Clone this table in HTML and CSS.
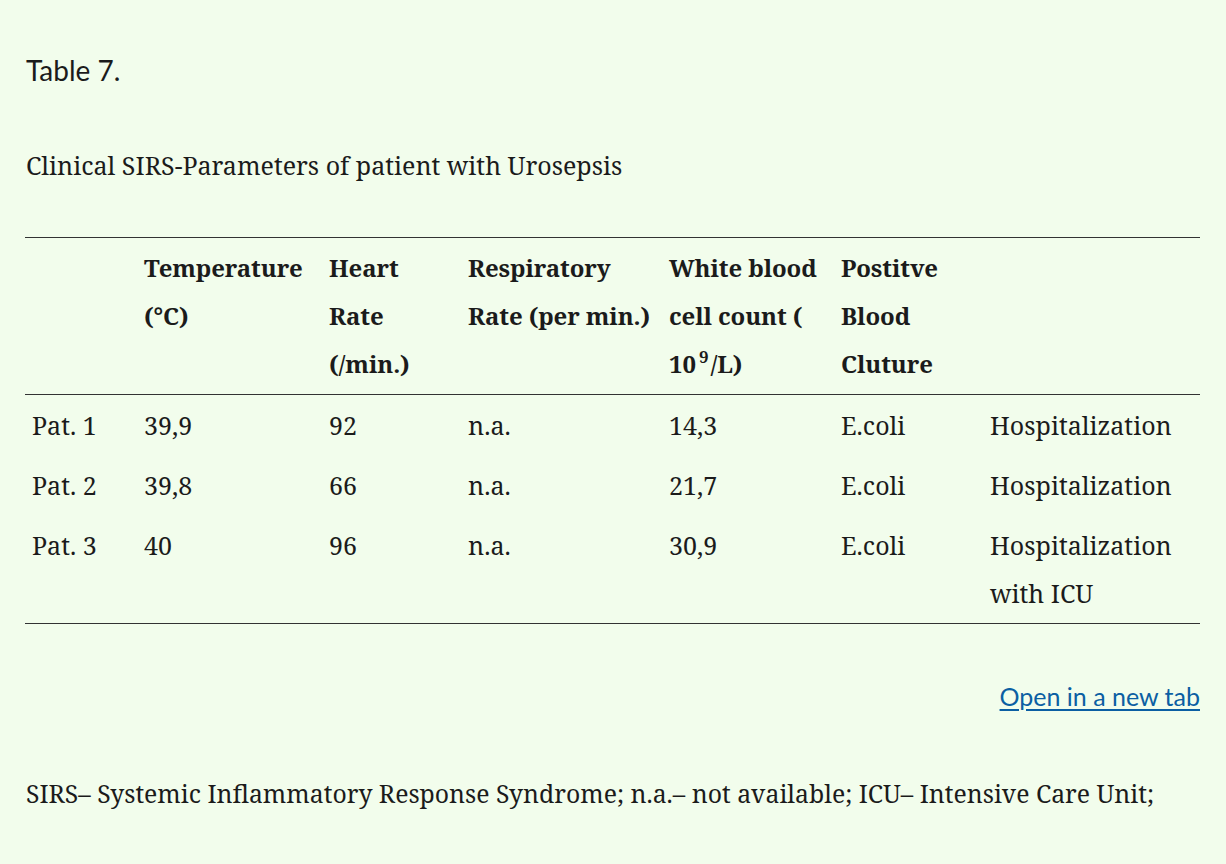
FILE: index.html
```html
<!DOCTYPE html>
<html>
<head>
<meta charset="utf-8">
<title>Table 7</title>
<link rel="stylesheet" href="styles.css">
</head>
<body>
<main class="page">
  <h3 class="title">Table 7.</h3>
  <p class="caption">Clinical SIRS-Parameters of patient with Urosepsis</p>
  <table class="data">
    <colgroup>
      <col class="c1"><col class="c2"><col class="c3"><col class="c4"><col class="c5"><col class="c6"><col class="c7">
    </colgroup>
    <thead>
      <tr>
        <th></th>
        <th>Temperature (°C)</th>
        <th>Heart Rate (/min.)</th>
        <th>Respiratory Rate (per min.)</th>
        <th>White blood cell count ( 10<sup>9</sup>/L)</th>
        <th>Postitve Blood Cluture</th>
        <th></th>
      </tr>
    </thead>
    <tbody>
      <tr><td>Pat. 1</td><td>39,9</td><td>92</td><td>n.a.</td><td>14,3</td><td>E.coli</td><td>Hospitalization</td></tr>
      <tr><td>Pat. 2</td><td>39,8</td><td>66</td><td>n.a.</td><td>21,7</td><td>E.coli</td><td>Hospitalization</td></tr>
      <tr><td>Pat. 3</td><td>40</td><td>96</td><td>n.a.</td><td>30,9</td><td>E.coli</td><td>Hospitalization with ICU</td></tr>
    </tbody>
  </table>
  <div class="links"><a href="#" class="newtab">Open in a new tab</a></div>
  <p class="foot">SIRS– Systemic Inflammatory Response Syndrome; n.a.– not available; ICU– Intensive Care Unit;</p>
</main>
</body>
</html>
```
FILE: styles.css
```css
html, body {
  margin: 0;
  padding: 0;
  background: #f2fdec;
}
body {
  color: #1b1b1b;
  font-family: "Noto Serif", "Liberation Serif", serif;
  font-size: 25px;
}
.page {
  padding: 50px 26px 40px 25px;
}
.title {
  margin: 0;
  font-family: Lato, "Noto Sans", sans-serif;
  font-weight: 400;
  font-size: 28px;
  line-height: 40px;
  padding-left: 1px;
}
.caption {
  margin: 51px 0 48px 1px;
  line-height: 48px;
}
.data {
  width: 1175px;
  table-layout: fixed;
  border-collapse: collapse;
  border-top: 1px solid #333;
  border-bottom: 1px solid #333;
}
.c1 { width: 112px; }
.c2 { width: 185px; }
.c3 { width: 139px; }
.c4 { width: 201px; }
.c5 { width: 172px; }
.c6 { width: 149px; }
.c7 { width: 217px; }
.data th,
.data td {
  text-align: left;
  vertical-align: top;
  padding: 6px 5px 6px 7px;
  line-height: 48px;
}
.data th {
  font-weight: 700;
  font-size: 24px;
  letter-spacing: -0.1px;
}
.data thead tr {
  border-bottom: 1px solid #333;
}
.data sup {
  font-size: 17px;
  line-height: 0;
  vertical-align: 10px;
  margin: 0 2px 0 3px;
}
.links {
  margin-top: 54px;
  text-align: right;
  font-family: Lato, "Noto Sans", sans-serif;
  font-size: 25px;
  line-height: 36px;
}
.newtab {
  color: #0b5fa3;
  text-decoration: underline;
  text-underline-offset: 3px;
}
.foot {
  margin: 55px 0 0 1px;
  line-height: 48px;
  font-size: 24.8px;
}
```
